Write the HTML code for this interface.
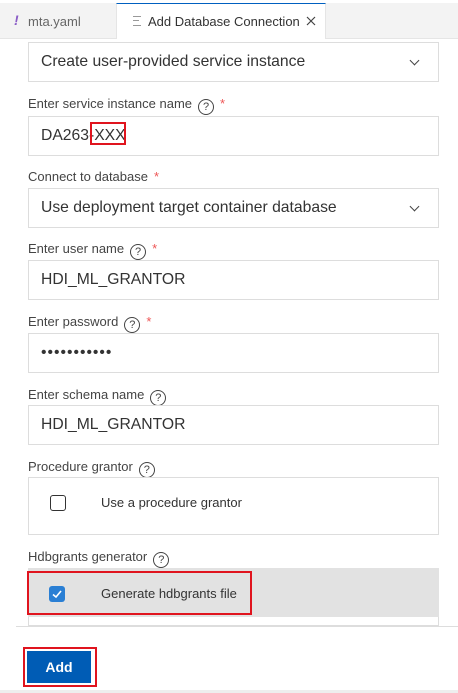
<html><head><style>
body{margin:0;width:458px;height:693px;background:#fff;font-family:"Liberation Sans",sans-serif;position:relative;overflow:hidden;color:#333}
.a{position:absolute}
.inp{position:absolute;left:28px;width:411px;height:40px;border:1px solid #ddd;box-sizing:border-box;font-size:15.7px;line-height:38px;padding-left:12px;color:#333}
.lab{position:absolute;left:28px;font-size:13px;color:#444}
.q{display:inline-block;width:14px;height:14px;border:1.3px solid #444;border-radius:50%;font-size:11px;line-height:14px;text-align:center;vertical-align:-2px;margin-left:6px}
.st{color:#e55;margin-left:6px}
.chev{position:absolute;right:20px;top:14px;width:6px;height:6px;border-right:1.3px solid #444;border-bottom:1.3px solid #444;transform:rotate(45deg)}
</style></head><body>
<div class="a" style="left:0;top:3px;width:458px;height:35px;background:#f3f3f3;border-bottom:1px solid #e5e5e5"></div>
<div class="a" style="left:14px;top:12px;color:#8a5cc6;font-weight:bold;font-style:italic;font-size:14px">!</div>
<div class="a" style="left:28px;top:14px;font-size:13px;color:#666">mta.yaml</div>
<div class="a" style="left:116px;top:3px;width:210px;height:36px;background:#fff;border-top:1px solid #0060c0;border-right:1px solid #e5e5e5;border-left:1px solid #e5e5e5;box-sizing:border-box"></div>
<div class="a" style="left:133px;top:16px;width:8px;height:8px;border-top:1px solid #999;border-bottom:1px solid #999"><div style="margin-top:3px;border-top:1px solid #999;width:6px"></div></div>
<div class="a" style="left:148px;top:14px;font-size:13px;color:#333">Add Database Connection</div>
<svg class="a" style="left:306px;top:16px" width="10" height="10"><path d="M1 1L9 9M9 1L1 9" stroke="#444" stroke-width="1.2"/></svg>
<div class="inp" style="top:42px">Create user-provided service instance<div class="chev"></div></div>
<div class="lab" style="top:96px">Enter service instance name<span class="q">?</span><span class="st">*</span></div>
<div class="inp" style="top:116px">DA263-XXX</div>
<div class="a" style="left:90px;top:122px;width:36px;height:23px;border:2.5px solid #e0141e;box-sizing:border-box"></div>
<div class="lab" style="top:169px">Connect to database<span class="st">*</span></div>
<div class="inp" style="top:188px">Use deployment target container database<div class="chev"></div></div>
<div class="lab" style="top:241px">Enter user name<span class="q">?</span><span class="st">*</span></div>
<div class="inp" style="top:260px">HDI_ML_GRANTOR</div>
<div class="lab" style="top:314px">Enter password<span class="q">?</span><span class="st">*</span></div>
<div class="inp" style="top:333px;letter-spacing:1px">•••••••••••</div>
<div class="lab" style="top:387px">Enter schema name<span class="q">?</span></div>
<div class="inp" style="top:405px">HDI_ML_GRANTOR</div>
<div class="lab" style="top:459px">Procedure grantor<span class="q">?</span></div>
<div class="a" style="left:28px;top:477px;width:411px;height:58px;border:1px solid #ddd;box-sizing:border-box"></div>
<div class="a" style="left:50px;top:495px;width:14px;height:14px;border:1.5px solid #333;border-radius:3px"></div>
<div class="a" style="left:101px;top:495px;font-size:13px;color:#333">Use a procedure grantor</div>
<div class="lab" style="top:549px">Hdbgrants generator<span class="q">?</span></div>
<div class="a" style="left:28px;top:568px;width:411px;height:58px;border:1px solid #ddd;border-top:0;box-sizing:border-box"></div>
<div class="a" style="left:28px;top:568px;width:411px;height:49px;background:#e2e2e2"></div>
<div class="a" style="left:27px;top:571px;width:225px;height:44px;border:2.5px solid #e0141e;box-sizing:border-box"></div>
<div class="a" style="left:49px;top:586px;width:16px;height:16px;background:#2a7fd4;border-radius:3px"></div>
<svg class="a" style="left:49px;top:586px" width="16" height="16"><path d="M4 8.5L7 11L12 5" stroke="#fff" stroke-width="1.6" fill="none"/></svg>
<div class="a" style="left:101px;top:586px;font-size:13px;color:#333">Generate hdbgrants file</div>
<div class="a" style="left:16px;top:626px;width:442px;height:1px;background:#ddd"></div>
<div class="a" style="left:23px;top:647px;width:74px;height:40px;border:2.5px solid #e0141e;box-sizing:border-box"></div>
<div class="a" style="left:27px;top:651px;width:64px;height:32px;background:#005cb5;color:#fff;font-weight:bold;font-size:14px;line-height:32px;text-align:center">Add</div>
<div class="a" style="left:0;top:690px;width:458px;height:3px;background:#eee"></div>
</body></html>
